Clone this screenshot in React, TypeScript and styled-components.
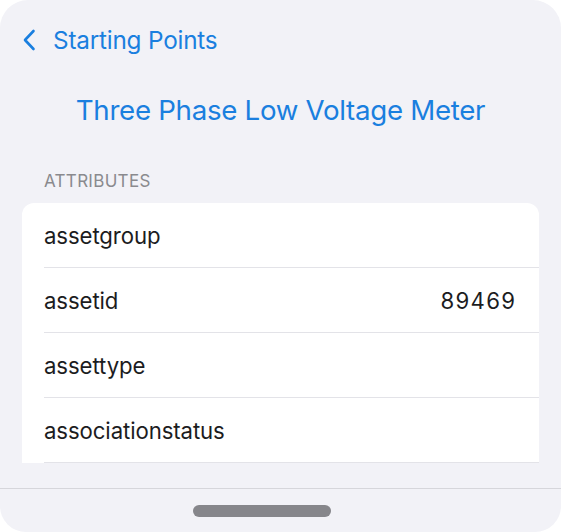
import React from "react";
import styled, { createGlobalStyle } from "styled-components";

const Global = createGlobalStyle`
  html, body { margin: 0; padding: 0; background: #ffffff; }
  body { font-family: Inter, "Noto Sans", "Liberation Sans", sans-serif; -webkit-font-smoothing: antialiased; }
  * { box-sizing: border-box; }
`;

const Frame = styled.div`
  width: 561px;
  height: 532px;
  border-radius: 28px 28px 26px 26px;
  background: #f2f2f7;
  overflow: hidden;
  display: flex;
  flex-direction: column;
`;

const NavBar = styled.div`
  height: 80px;
  display: flex;
  align-items: center;
  padding-left: 22px;
  flex-shrink: 0;
`;

const BackButton = styled.button`
  display: flex;
  align-items: center;
  gap: 17px;
  background: none;
  border: none;
  padding: 0;
  color: #1a7fdf;
  font-family: inherit;
  font-size: 24.3px;
  letter-spacing: -0.2px;
  cursor: pointer;
`;

const Title = styled.h1`
  margin: 0;
  height: 60px;
  line-height: 60px;
  text-align: center;
  font-weight: 400;
  font-size: 27.7px;
  letter-spacing: -0.3px;
  color: #1a7fdf;
  flex-shrink: 0;
`;

const SectionHeader = styled.div`
  height: 63px;
  display: flex;
  align-items: flex-end;
  padding: 0 0 12px 44px;
  font-size: 17px;
  line-height: 20px;
  color: #8a8a8e;
  letter-spacing: 0.3px;
  flex-shrink: 0;
`;

const Scroll = styled.div`
  height: 261px;
  overflow: hidden;
  padding: 0 22px;
  flex-shrink: 0;
`;

const Card = styled.div`
  background: #ffffff;
  border-radius: 12px 12px 0 0;
`;

const Row = styled.div`
  padding-left: 22px;
`;

const RowInner = styled.div`
  height: 65px;
  display: flex;
  align-items: center;
  justify-content: space-between;
  padding-right: 24px;
  border-bottom: 1px solid #e3e3e8;
  font-size: 22.2px;
  color: #1c1c1e;
  letter-spacing: -0.1px;
`;

const Value = styled.span`
  letter-spacing: 1.3px;
  margin-right: -1.3px;
`;

const Spacer = styled.div`
  flex: 1;
`;

const BottomBar = styled.div`
  height: 44px;
  border-top: 1.5px solid #d6d6db;
  display: flex;
  justify-content: center;
  padding: 16px 37px 0 0;
  flex-shrink: 0;
`;

const HomeIndicator = styled.div`
  width: 138px;
  height: 12px;
  border-radius: 6px;
  background: #86868b;
`;

const rows: { label: string; value?: string }[] = [
  { label: "assetgroup" },
  { label: "assetid", value: "89469" },
  { label: "assettype" },
  { label: "associationstatus" },
];

export default function App() {
  return (
    <>
      <Global />
      <Frame>
        <NavBar>
          <BackButton>
            <svg width="14" height="22" viewBox="0 0 14 22" fill="none">
              <path d="M11.5 2 L3 11 L11.5 20" stroke="#1a7fdf" strokeWidth="2.6" strokeLinecap="round" strokeLinejoin="round" />
            </svg>
            Starting Points
          </BackButton>
        </NavBar>
        <Title>Three Phase Low Voltage Meter</Title>
        <SectionHeader>ATTRIBUTES</SectionHeader>
        <Scroll>
          <Card>
            {rows.map((r) => (
              <Row key={r.label}>
                <RowInner>
                  <span>{r.label}</span>
                  {r.value && <Value>{r.value}</Value>}
                </RowInner>
              </Row>
            ))}
          </Card>
        </Scroll>
        <Spacer />
        <BottomBar>
          <HomeIndicator />
        </BottomBar>
      </Frame>
    </>
  );
}
